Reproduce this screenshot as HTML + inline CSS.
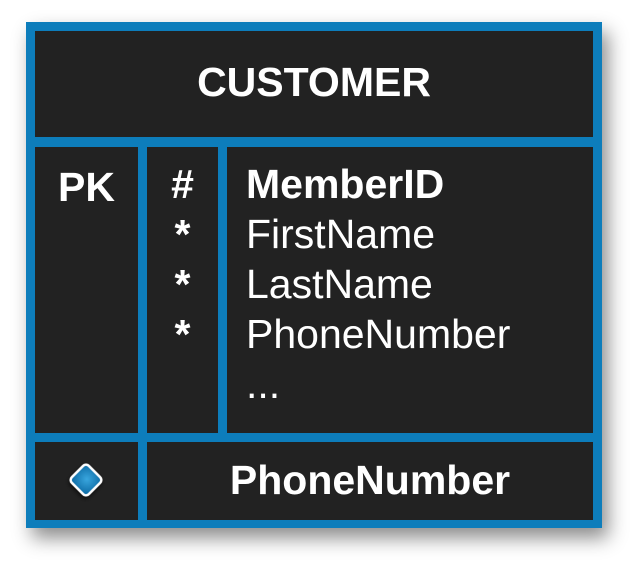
<!DOCTYPE html>
<html><head><meta charset="utf-8"><style>
html,body{margin:0;padding:0;background:#fff;width:643px;height:572px;overflow:hidden}
.box{position:absolute;left:26px;top:22px;width:576px;height:506px;background:#0d7dbb;box-shadow:6px 10px 18px rgba(0,0,0,.45)}
.c{position:absolute;background:#222;color:#fff;font-family:"Liberation Sans",sans-serif;font-size:41px}
.b{font-weight:bold}
.t{position:absolute;left:0;right:0;text-align:center}
</style></head><body>
<div class="box"></div>
<div class="c b" style="left:35px;top:31px;width:558px;height:106px;"><div class="t" style="top:28px">CUSTOMER</div></div>
<div class="c b" style="left:35px;top:147px;width:103px;height:286px;"><div class="t" style="top:17px">PK</div></div>
<div class="c b" style="left:147px;top:147px;width:71px;height:286px;line-height:50px;text-align:center;padding-top:12px;box-sizing:border-box">#<br>*<br>*<br>*</div>
<div class="c" style="left:227px;top:147px;width:366px;height:286px;line-height:50px;padding-left:19px;padding-top:12px;box-sizing:border-box"><span class="b">MemberID</span><br>FirstName<br>LastName<br>PhoneNumber<br>...</div>
<div class="c" style="left:35px;top:442px;width:103px;height:78px;">
<svg width="103" height="78" style="position:absolute;left:0;top:0"><defs><radialGradient id="g" cx="50%" cy="45%" r="60%"><stop offset="0" stop-color="#39a6de"/><stop offset="1" stop-color="#0f6ea8"/></radialGradient></defs>
<rect x="39" y="26" width="24" height="24" rx="4" transform="rotate(45 51 38)" fill="url(#g)" stroke="#fff" stroke-width="2.5" style="filter:drop-shadow(1px 2px 2px rgba(0,0,0,.6))"/></svg></div>
<div class="c b" style="left:147px;top:442px;width:446px;height:78px;"><div class="t" style="top:15px">PhoneNumber</div></div>
</body></html>
